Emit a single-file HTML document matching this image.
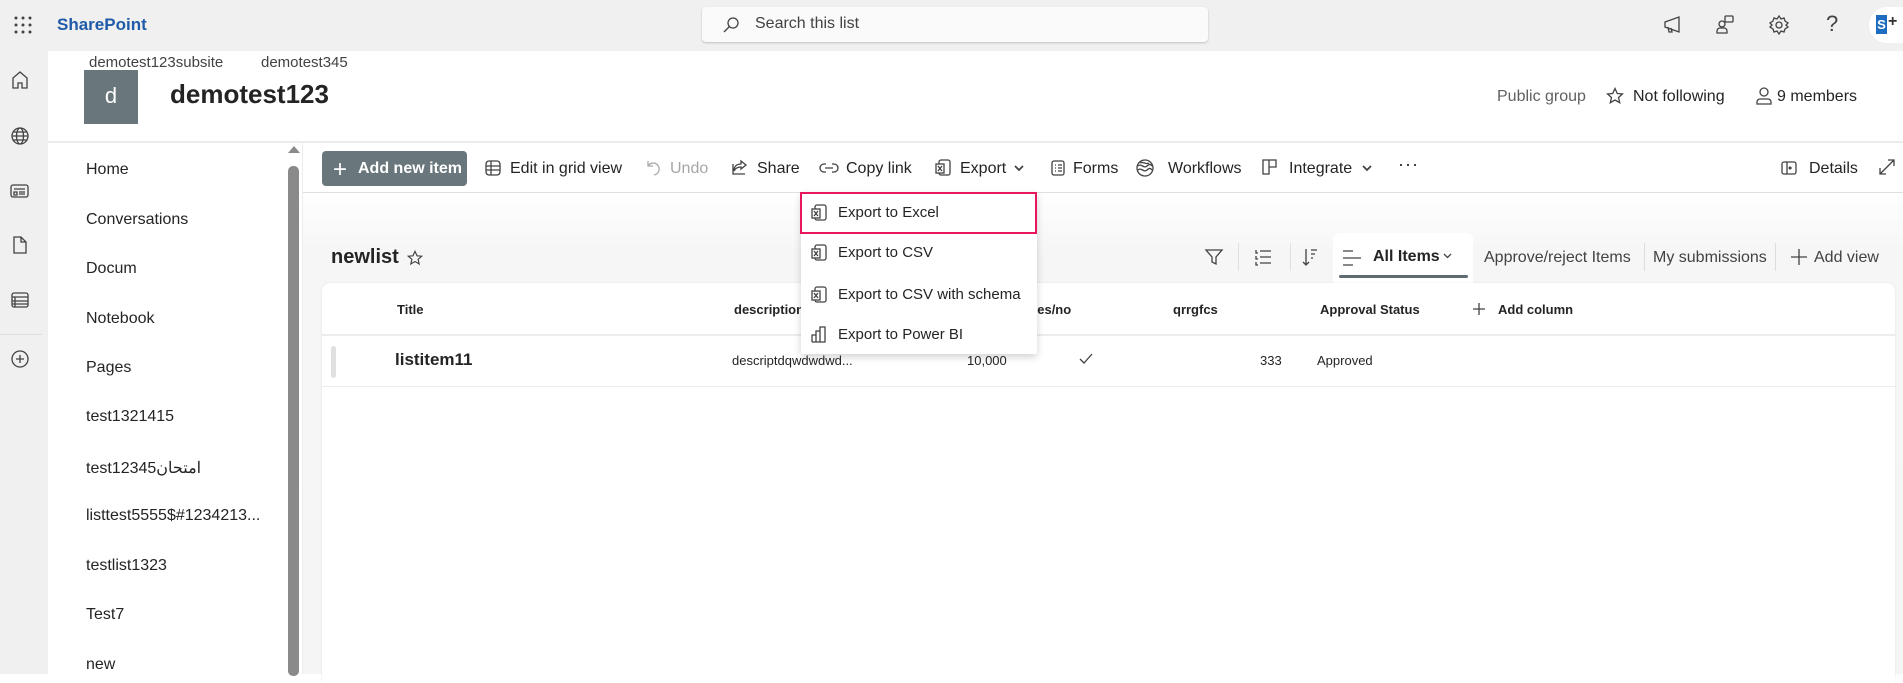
<!DOCTYPE html>
<html><head><meta charset="utf-8"><style>
*{box-sizing:border-box;margin:0;padding:0}
body{width:1903px;height:674px;overflow:hidden;font-family:"Liberation Sans","Noto Sans CJK SC",sans-serif;color:#242424;background:#fff;position:relative}
.a{position:absolute;white-space:nowrap}
svg{position:absolute;fill:none;stroke:#424242;stroke-width:1.3}
.cmd{font-size:16px;top:160px}
.nav{left:86px;font-size:16px}
.hd{font-size:13px;font-weight:bold;top:302px}
.mi{font-size:15px;left:838px}
</style></head><body>
<div class="a" style="left:0;top:0;width:1903px;height:51px;background:#f0f0f0"></div>
<svg style="left:13px;top:15px" width="20" height="20" viewBox="0 0 20 20"><g fill="#424242" stroke="none"><circle cx="3" cy="3" r="1.5"/><circle cx="10" cy="3" r="1.5"/><circle cx="17" cy="3" r="1.5"/><circle cx="3" cy="10" r="1.5"/><circle cx="10" cy="10" r="1.5"/><circle cx="17" cy="10" r="1.5"/><circle cx="3" cy="17" r="1.5"/><circle cx="10" cy="17" r="1.5"/><circle cx="17" cy="17" r="1.5"/></g></svg>
<div class="a" style="left:57px;top:15px;font-size:17px;font-weight:bold;color:#1e5ba8">SharePoint</div>
<div class="a" style="left:702px;top:7px;width:506px;height:35px;background:#fafafa;border-radius:4px;box-shadow:0 1px 2px rgba(0,0,0,.2)"></div>
<svg style="left:722px;top:16px" width="18" height="18" viewBox="0 0 18 18"><circle cx="11" cy="7" r="5"/><path d="M7.5 10.5L2 16"/></svg>
<div class="a" style="left:755px;top:15px;font-size:16px;color:#424242">Search this list</div>
<svg style="left:1662px;top:14px" width="22" height="22" viewBox="0 0 22 22"><path d="M3 8l14-5v15L3 13z M6 13l1 5h3l-1-4"/></svg>
<svg style="left:1714px;top:14px" width="22" height="22" viewBox="0 0 22 22"><rect x="11" y="2" width="8" height="6" rx="1"/><circle cx="8" cy="10" r="3"/><path d="M3 19v-2a3 3 0 013-3h4a3 3 0 013 3v2z"/></svg>
<svg style="left:1768px;top:14px" width="22" height="22" viewBox="0 0 22 22"><circle cx="11" cy="11" r="3"/><path d="M11 2l2 3 3-1 1 3 3 2-2 2 2 2-3 2-1 3-3-1-2 3-2-3-3 1-1-3-3-2 2-2-2-2 3-2 1-3 3 1z"/></svg>
<div class="a" style="left:1826px;top:11px;font-size:22px;color:#424242">?</div>
<div class="a" style="left:1869px;top:7px;width:34px;height:36px;border-radius:18px 0 0 18px;background:#fff"></div>
<div class="a" style="left:1876px;top:15px;width:11px;height:19px;background:#1e6cc0;color:#fff;font-size:13px;font-weight:bold;text-align:center;line-height:19px">S</div>
<div class="a" style="left:1888px;top:13px;font-size:16px;font-weight:bold;color:#333">+</div>
<div class="a" style="left:0;top:51px;width:48px;height:623px;background:#f0f0f0"></div>
<svg style="left:10px;top:70px" width="20" height="20" viewBox="0 0 20 20"><path d="M3 18V8l7-6 7 6v10h-5v-5h-4v5z"/></svg>
<svg style="left:10px;top:126px" width="20" height="20" viewBox="0 0 20 20"><circle cx="10" cy="10" r="8"/><ellipse cx="10" cy="10" rx="3.5" ry="8"/><path d="M2 10h16M3.5 6h13M3.5 14h13"/></svg>
<svg style="left:10px;top:181px" width="20" height="20" viewBox="0 0 20 20"><rect x="1" y="4" width="17" height="12" rx="2"/><path d="M4 8h11M4 11h3v3H4zM9 11h6M9 13h6"/></svg>
<svg style="left:10px;top:235px" width="20" height="20" viewBox="0 0 20 20"><path d="M4 2h7l5 5v11H4z M11 2v5h5"/></svg>
<svg style="left:10px;top:290px" width="20" height="20" viewBox="0 0 20 20"><rect x="2" y="3" width="16" height="14" rx="2"/><path d="M2 7h16M2 11h16M2 14h16M5 7v10"/></svg>
<div class="a" style="left:0;top:334px;width:42px;height:1px;background:#ddd"></div>
<svg style="left:10px;top:349px" width="20" height="20" viewBox="0 0 20 20"><circle cx="10" cy="10" r="8"/><path d="M10 6v8M6 10h8"/></svg>
<div class="a" style="left:89px;top:54px;font-size:15px;color:#424242">demotest123subsite</div>
<div class="a" style="left:261px;top:54px;font-size:15px;color:#424242">demotest345</div>
<div class="a" style="left:84px;top:70px;width:54px;height:54px;background:#69777c;color:#fff;font-size:22px;text-align:center;line-height:52px">d</div>
<div class="a" style="left:170px;top:79px;font-size:26px;font-weight:bold;color:#242424">demotest123</div>
<div class="a" style="left:1497px;top:88px;font-size:16px;color:#616161">Public group</div>
<svg style="left:1606px;top:87px" width="18" height="18" viewBox="0 0 18 18"><path d="M9 1.5l2.3 5 5.2.5-4 3.5 1.2 5.2L9 13l-4.7 2.7 1.2-5.2-4-3.5 5.2-.5z"/></svg>
<div class="a" style="left:1633px;top:88px;font-size:16px">Not following</div>
<svg style="left:1755px;top:86px" width="18" height="20" viewBox="0 0 18 20"><circle cx="9" cy="6" r="4"/><path d="M2 18v-2a3 3 0 013-3h8a3 3 0 013 3v2z"/></svg>
<div class="a" style="left:1777px;top:88px;font-size:16px">9 members</div>
<div class="a" style="left:48px;top:141px;width:1855px;height:2px;background:#ececec"></div>
<div class="a nav" style="top:161px">Home</div>
<div class="a nav" style="top:211px">Conversations</div>
<div class="a nav" style="top:260px">Docum</div>
<div class="a nav" style="top:310px">Notebook</div>
<div class="a nav" style="top:359px">Pages</div>
<div class="a nav" style="top:408px">test1321415</div>
<div class="a nav" style="top:458px">test12345امتحان</div>
<div class="a nav" style="top:507px">listtest5555$#1234213...</div>
<div class="a nav" style="top:557px">testlist1323</div>
<div class="a nav" style="top:606px">Test7</div>
<div class="a nav" style="top:656px">new</div>
<div class="a" style="left:288px;top:146px;width:0;height:0;border-left:6px solid transparent;border-right:6px solid transparent;border-bottom:7px solid #8a8a8a"></div>
<div class="a" style="left:288px;top:166px;width:11px;height:510px;border-radius:5px;background:#8a8a8a"></div>
<div class="a" style="left:302px;top:143px;width:1px;height:531px;background:#ececec"></div>
<div class="a" style="left:303px;top:193px;width:1600px;height:481px;background:linear-gradient(#fff,#f6f6f6 60px,#f5f5f5)"></div>
<div class="a" style="left:303px;top:192px;width:1600px;height:1px;background:#e0e0e0"></div>
<div class="a" style="left:322px;top:151px;width:145px;height:35px;background:#69777c;border-radius:4px;color:#fff;font-size:16px;font-weight:bold;line-height:35px;padding-left:36px">Add new item</div>
<div class="a" style="left:333px;top:156px;color:#fff;font-size:24px">+</div>
<svg style="left:484px;top:159px" width="18" height="18" viewBox="0 0 18 18"><rect x="2" y="2" width="14" height="14" rx="3"/><path d="M2 7h14M2 11h14M7 2v14"/></svg>
<div class="a cmd" style="left:510px">Edit in grid view</div>
<svg style="left:644px;top:158px" width="18" height="18" viewBox="0 0 18 18"><path stroke="#aaa" d="M4 3v5h5M4 8a6 6 0 116 9"/></svg>
<div class="a cmd" style="left:670px;color:#a6a6a6">Undo</div>
<svg style="left:731px;top:158px" width="18" height="18" viewBox="0 0 18 18"><path d="M10 3l5 4-5 4V9c-4 0-6 2-7 4 0-5 3-7 7-7z M2 6v10h12"/></svg>
<div class="a cmd" style="left:757px">Share</div>
<svg style="left:819px;top:159px" width="20" height="18" viewBox="0 0 20 18"><path d="M7 5H5a4 4 0 000 8h2M13 5h2a4 4 0 010 8h-2M6 9h8"/></svg>
<div class="a cmd" style="left:846px">Copy link</div>
<svg style="left:934px;top:158px" width="18" height="19" viewBox="0 0 18 19"><rect x="5" y="2" width="11" height="15" rx="2"/><rect x="2" y="6" width="8" height="9" fill="#fff"/><path d="M4 8l4 5M8 8l-4 5"/></svg>
<div class="a cmd" style="left:960px">Export</div>
<svg style="left:1013px;top:164px" width="12" height="8" viewBox="0 0 12 8"><path d="M2 2l4 4 4-4" stroke-width="1.8"/></svg>
<svg style="left:1049px;top:159px" width="18" height="18" viewBox="0 0 18 18"><rect x="3" y="2" width="12" height="14" rx="2"/><path d="M6 6h1M9 6h4M6 9h1M9 9h4M6 12h1M9 12h4"/></svg>
<div class="a cmd" style="left:1073px">Forms</div>
<svg style="left:1135px;top:158px" width="20" height="20" viewBox="0 0 20 20"><circle cx="10" cy="10" r="8"/><path d="M3 8c3-3 6 3 9 0s4-1 5 0M3 12c3-3 6 3 9 0s4-1 5 0M5 5c3-2 6 2 9 0"/></svg>
<div class="a cmd" style="left:1168px">Workflows</div>
<svg style="left:1261px;top:158px" width="18" height="18" viewBox="0 0 18 18"><path d="M2 2h6v14H2zM8 2h7v7H8"/></svg>
<div class="a cmd" style="left:1289px">Integrate</div>
<svg style="left:1361px;top:164px" width="12" height="8" viewBox="0 0 12 8"><path d="M2 2l4 4 4-4" stroke-width="1.8"/></svg>
<div class="a" style="left:1398px;top:154px;font-size:18px;letter-spacing:1px">···</div>
<svg style="left:1780px;top:159px" width="18" height="18" viewBox="0 0 18 18"><rect x="2" y="3" width="14" height="12" rx="2"/><path d="M7 3v12M12 9H9m1.5-1.5L9 9l1.5 1.5"/></svg>
<div class="a cmd" style="left:1809px">Details</div>
<svg style="left:1877px;top:157px" width="20" height="20" viewBox="0 0 20 20"><path d="M3 17L17 3M11 3h6v6M3 11v6h6"/></svg>
<div class="a" style="left:331px;top:246px;font-size:20px;font-weight:bold">newlist</div>
<svg style="left:407px;top:250px" width="16" height="16" viewBox="0 0 18 18"><path d="M9 1.5l2.3 5 5.2.5-4 3.5 1.2 5.2L9 13l-4.7 2.7 1.2-5.2-4-3.5 5.2-.5z"/></svg>
<svg style="left:1204px;top:247px" width="20" height="20" viewBox="0 0 20 20"><path d="M2 3h16l-6 7v7l-4-2v-5z"/></svg>
<div class="a" style="left:1238px;top:243px;width:1px;height:28px;background:#e0e0e0"></div>
<svg style="left:1253px;top:247px" width="20" height="20" viewBox="0 0 20 20"><path d="M7 4h11M7 10h11M7 16h11M3 3v3h2M3 9v3h2M3 15v3h2"/></svg>
<div class="a" style="left:1290px;top:243px;width:1px;height:28px;background:#e0e0e0"></div>
<svg style="left:1300px;top:247px" width="20" height="20" viewBox="0 0 20 20"><path d="M6 2v16M3 15l3 3 3-3M11 3h6M11 7h4M11 11h2"/></svg>
<div class="a" style="left:1333px;top:233px;width:140px;height:50px;background:#fff;border-radius:6px 6px 0 0"></div>
<svg style="left:1341px;top:248px" width="22" height="20" viewBox="0 0 22 20"><path d="M2 3h10M2 10h18M2 17h10"/></svg>
<div class="a" style="left:1373px;top:248px;font-size:16px;font-weight:bold">All Items</div>
<svg style="left:1443px;top:253px" width="9" height="6" viewBox="0 0 9 6"><path d="M1 1l3.5 3.5L8 1"/></svg>
<div class="a" style="left:1339px;top:275px;width:129px;height:3px;background:#5f6b70;border-radius:2px"></div>
<div class="a" style="left:1484px;top:249px;font-size:16px;color:#424242">Approve/reject Items</div>
<div class="a" style="left:1644px;top:243px;width:1px;height:28px;background:#ddd"></div>
<div class="a" style="left:1653px;top:249px;font-size:16px;color:#424242">My submissions</div>
<div class="a" style="left:1775px;top:243px;width:1px;height:28px;background:#ddd"></div>
<svg style="left:1789px;top:247px" width="20" height="20" viewBox="0 0 20 20"><path d="M10 2v16M2 10h16"/></svg>
<div class="a" style="left:1814px;top:249px;font-size:16px;color:#424242">Add view</div>
<div class="a" style="left:322px;top:283px;width:1573px;height:400px;background:#fff;border-radius:8px 8px 0 0;box-shadow:0 0 2px rgba(0,0,0,.08)"></div>
<div class="a" style="left:322px;top:334px;width:1573px;height:2px;background:#ededed"></div>
<div class="a hd" style="left:397px">Title</div>
<div class="a hd" style="left:734px">description</div>
<div class="a hd" style="left:1030px">yes/no</div>
<div class="a hd" style="left:1173px">qrrgfcs</div>
<div class="a hd" style="left:1320px">Approval Status</div>
<svg style="left:1472px;top:302px" width="14" height="14" viewBox="0 0 14 14"><path d="M7 1v12M1 7h12"/></svg>
<div class="a hd" style="left:1498px">Add column</div>
<div class="a" style="left:331px;top:346px;width:5px;height:32px;border-radius:3px;background:#e0e0e0"></div>
<div class="a" style="left:395px;top:350px;font-size:17px;font-weight:bold">listitem11</div>
<div class="a" style="left:732px;top:353px;font-size:13px">descriptdqwdwdwd...</div>
<div class="a" style="left:967px;top:353px;font-size:13px">10,000</div>
<svg style="left:1078px;top:352px" width="16" height="14" viewBox="0 0 16 14"><path d="M2 7l4 4 8-9"/></svg>
<div class="a" style="left:1260px;top:353px;font-size:13px">333</div>
<div class="a" style="left:1317px;top:353px;font-size:13px">Approved</div>
<div class="a" style="left:322px;top:386px;width:1573px;height:1px;background:#ededed"></div>
<div class="a" style="left:801px;top:192px;width:236px;height:162px;background:#fff;box-shadow:0 3px 8px rgba(0,0,0,.18);border-radius:2px"></div>
<div class="a" style="left:800px;top:192px;width:237px;height:42px;border:2px solid #e8175d"></div>
<svg style="left:810px;top:203px" width="18" height="19" viewBox="0 0 18 19"><rect x="5" y="2" width="11" height="15" rx="2"/><rect x="2" y="6" width="8" height="9" fill="#fff"/><path d="M4 8l4 5M8 8l-4 5"/></svg>
<div class="a mi" style="top:204px">Export to Excel</div>
<svg style="left:810px;top:243px" width="18" height="19" viewBox="0 0 18 19"><rect x="5" y="2" width="11" height="15" rx="2"/><rect x="2" y="6" width="8" height="9" fill="#fff"/><path d="M4 8l4 5M8 8l-4 5"/></svg>
<div class="a mi" style="top:244px">Export to CSV</div>
<svg style="left:810px;top:285px" width="18" height="19" viewBox="0 0 18 19"><rect x="5" y="2" width="11" height="15" rx="2"/><rect x="2" y="6" width="8" height="9" fill="#fff"/><path d="M4 8l4 5M8 8l-4 5"/></svg>
<div class="a mi" style="top:286px">Export to CSV with schema</div>
<svg style="left:810px;top:325px" width="18" height="19" viewBox="0 0 18 19"><path d="M2 17V10h4v7M6 17V6h4v11M10 17V2h5v15H2"/></svg>
<div class="a mi" style="top:326px">Export to Power BI</div>
</body></html>
